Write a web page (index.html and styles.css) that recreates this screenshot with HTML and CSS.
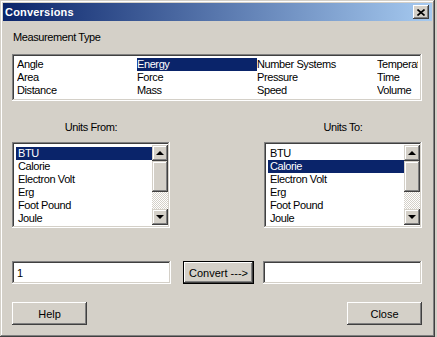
FILE: index.html
```html
<!DOCTYPE html>
<html lang="en">
<head>
  <meta charset="UTF-8">
  <meta name="viewport" content="width=device-width, initial-scale=1.0">
  <title>Conversions</title>
  <link rel="stylesheet" href="styles.css">
</head>
<body>
  <div class="window">
    <!-- Title bar -->
    <div class="titlebar">
      <span class="title">Conversions</span>
      <button class="title-close">
        <svg width="8" height="7" viewBox="0 0 8 7">
          <path d="M0.5 0.5 L7.5 6.5 M7.5 0.5 L0.5 6.5" stroke="#000" stroke-width="1.6" fill="none"/>
        </svg>
      </button>
    </div>

    <div class="content">
      <div class="label">Measurement Type</div>

      <!-- Measurement type list -->
      <div class="type-list">
        <div class="type-grid">
          <div class="item">Angle</div>
          <div class="item">Area</div>
          <div class="item">Distance</div>
          <div class="item selected">Energy</div>
          <div class="item">Force</div>
          <div class="item">Mass</div>
          <div class="item">Number Systems</div>
          <div class="item">Pressure</div>
          <div class="item">Speed</div>
          <div class="item">Temperature</div>
          <div class="item">Time</div>
          <div class="item">Volume</div>
        </div>
      </div>

      <!-- Units lists -->
      <div class="units">
        <div class="unit-col">
          <div class="label center">Units From:</div>
          <div class="listbox">
            <ul class="items">
              <li class="item selected">BTU</li>
              <li class="item">Calorie</li>
              <li class="item">Electron Volt</li>
              <li class="item">Erg</li>
              <li class="item">Foot Pound</li>
              <li class="item">Joule</li>
            </ul>
            <div class="scrollbar">
              <div class="scroll-btn"><span class="arrow up"></span></div>
              <div class="thumb"></div>
              <div class="track"></div>
              <div class="scroll-btn"><span class="arrow down"></span></div>
            </div>
          </div>
        </div>
        <div class="unit-col">
          <div class="label center">Units To:</div>
          <div class="listbox">
            <ul class="items">
              <li class="item">BTU</li>
              <li class="item selected">Calorie</li>
              <li class="item">Electron Volt</li>
              <li class="item">Erg</li>
              <li class="item">Foot Pound</li>
              <li class="item">Joule</li>
            </ul>
            <div class="scrollbar">
              <div class="scroll-btn"><span class="arrow up"></span></div>
              <div class="thumb"></div>
              <div class="track"></div>
              <div class="scroll-btn"><span class="arrow down"></span></div>
            </div>
          </div>
        </div>
      </div>

      <!-- Convert row -->
      <div class="convert-row">
        <input type="text" class="field" value="1">
        <button class="btn default">Convert ---&gt;</button>
        <input type="text" class="field" value="">
      </div>

      <!-- Dialog buttons -->
      <div class="button-row">
        <button class="btn">Help</button>
        <button class="btn">Close</button>
      </div>
    </div>
  </div>
</body>
</html>
```

FILE: styles.css
```css
body {
  margin: 0;
  background-color: #d4d0c8;
  font-family: "Liberation Sans", Arial, sans-serif;
  font-size: 11px;
  letter-spacing: -0.4px;
  color: #000;
}
ul {
  list-style: none;
  margin: 0;
  padding: 0;
}
.window {
  width: 435px;
  height: 337px;
  box-sizing: border-box;
  padding: 3px;
  background-color: #d4d0c8;
  box-shadow: inset -1px -1px #404040, inset 1px 1px #d4d0c8, inset -2px -2px #808080, inset 2px 2px #fff;
  display: flex;
  flex-direction: column;
}
.titlebar {
  height: 18px;
  display: flex;
  align-items: center;
  justify-content: space-between;
  padding: 0 3px 0 2px;
  background: linear-gradient(to right, #0a246a, #a6caf0);
}
.title {
  color: #fff;
  font-weight: bold;
  letter-spacing: 0.2px;
}
.title-close {
  width: 16px;
  height: 14px;
  padding: 0;
  border: none;
  background-color: #d4d0c8;
  box-shadow: inset -1px -1px #404040, inset 1px 1px #fff, inset -2px -2px #808080;
  display: flex;
  align-items: center;
  justify-content: center;
}
.content {
  flex: 1;
  display: flex;
  flex-direction: column;
  padding: 10px 10px 0 9px;
}
.label {
  line-height: 13px;
  padding-left: 1px;
}
.label.center {
  text-align: center;
  padding-left: 0;
}
/* sunken white boxes */
.type-list,
.listbox,
.field {
  box-sizing: border-box;
  background-color: #fff;
  box-shadow: inset -1px -1px #fff, inset 1px 1px #808080, inset -2px -2px #d4d0c8, inset 2px 2px #404040;
}
.type-list {
  margin-top: 10px;
  height: 47px;
  padding: 4px 4px 2px 5px;
  overflow: hidden;
}
.type-grid {
  display: grid;
  grid-template-columns: repeat(4, 120px);
  grid-template-rows: repeat(3, 13px);
  grid-auto-flow: column;
  overflow: hidden;
  height: 39px;
}
.item {
  line-height: 13px;
  white-space: nowrap;
  overflow: hidden;
}
.item.selected {
  background-color: #0a246a;
  color: #fff;
}
.units {
  margin-top: 20px;
  display: flex;
  justify-content: space-between;
}
.unit-col {
  width: 158px;
}
.listbox {
  margin-top: 8px;
  height: 86px;
  padding: 3px 2px 3px 4px;
  display: flex;
}
.items {
  flex: 1;
  padding-top: 2px;
  overflow: hidden;
}
.items .item {
  padding-left: 2px;
}
.scrollbar {
  width: 16px;
  display: flex;
  flex-direction: column;
}
.scroll-btn,
.thumb {
  background-color: #d4d0c8;
  box-shadow: inset -1px -1px #404040, inset 1px 1px #d4d0c8, inset -2px -2px #808080, inset 2px 2px #fff;
}
.scroll-btn {
  height: 16px;
  display: flex;
  align-items: center;
  justify-content: center;
}
.thumb {
  height: 31px;
}
.track {
  flex: 1;
  background: repeating-conic-gradient(#fff 0 25%, #d4d0c8 0 50%) 0 0 / 2px 2px;
}
.arrow {
  width: 0;
  height: 0;
  border-left: 4px solid transparent;
  border-right: 4px solid transparent;
}
.arrow.up {
  border-bottom: 4px solid #000;
}
.arrow.down {
  border-top: 4px solid #000;
}
.convert-row {
  margin-top: 33px;
  display: flex;
  align-items: center;
}
.field {
  width: 159px;
  height: 23px;
  border: none;
  padding: 2px 4px 2px 5px;
  font: inherit;
  outline: none;
}
.btn {
  height: 23px;
  width: 75px;
  padding: 0;
  border: none;
  font: inherit;
  color: #000;
  background-color: #d4d0c8;
  box-shadow: inset -1px -1px #404040, inset 1px 1px #fff, inset -2px -2px #808080, inset 2px 2px #d4d0c8;
}
.btn.default {
  width: 71px;
  margin: 0 9px 0 12px;
  border: 1px solid #000;
}
.button-row {
  margin-top: 18px;
  display: flex;
  justify-content: space-between;
}
```
